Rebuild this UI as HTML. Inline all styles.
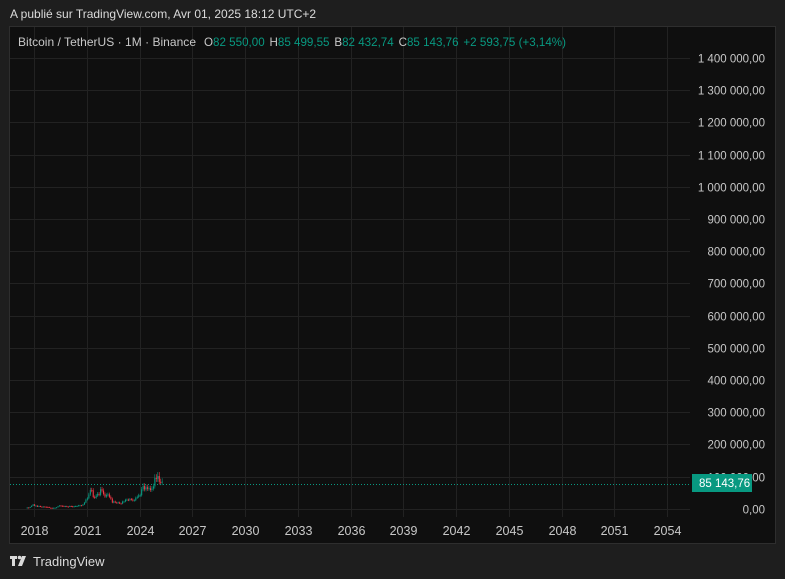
<!DOCTYPE html>
<html><head><meta charset="utf-8"><style>
*{margin:0;padding:0;box-sizing:border-box}
body{width:785px;height:579px;background:#1e1e1e;font-family:"Liberation Sans",sans-serif;overflow:hidden;position:relative;color:#d1d4dc}
.top{position:absolute;left:10px;top:7px;font-size:12px;color:#dbdbdb}
.panel{position:absolute;left:9px;top:26px;width:767px;height:518px;background:#0f0f0f;border:1px solid #2e2e2e}
.bottom{position:absolute;left:33px;top:554px;font-size:13px;color:#dbdbdb}
</style></head><body>
<div class="top">A publié sur TradingView.com, Avr 01, 2025 18:12 UTC+2</div>
<div class="panel"></div>
<svg width="785" height="579" style="position:absolute;left:0;top:0" id="s" font-family="Liberation Sans, sans-serif">
<g id="grid" stroke="#222" stroke-width="1"></g>
<g id="c"></g>
<line x1="10" y1="484.5" x2="690" y2="484.5" stroke="#089981" stroke-dasharray="1,2"/>
<text x="18" y="46" font-size="12" fill="#c8c8c8" textLength="178">Bitcoin / TetherUS · 1M · Binance</text>
<text x="204" y="46" font-size="12" fill="#c8c8c8" textLength="362" lengthAdjust="spacingAndGlyphs">O<tspan fill="#089981">82 550,00</tspan><tspan dx="5">H</tspan><tspan fill="#089981">85 499,55</tspan><tspan dx="5">B</tspan><tspan fill="#089981">82 432,74</tspan><tspan dx="5">C</tspan><tspan fill="#089981">85 143,76</tspan><tspan dx="5" fill="#089981">+2 593,75 (+3,14%)</tspan></text>
<g id="ax" font-size="11.5" fill="#c8c8c8"></g>
<rect x="692" y="474" width="60" height="18" fill="#089981"/>
<text x="699" y="487" font-size="11.5" fill="#fff">85 143,76</text>
<g transform="translate(10,555)" fill="#dbdbdb"><path d="M0 1h7v3H5v7H2V4H0z"/><circle cx="9.5" cy="2.5" r="1.8"/><path d="M12 1h4l-4 10H8z"/></g>
</svg>
<div class="bottom">TradingView</div>
<script>
var g=document.getElementById('grid'),ax=document.getElementById('ax'),c=document.getElementById('c'),NS='http://www.w3.org/2000/svg';
function el(p,t,a){var e=document.createElementNS(NS,t);for(var k in a)e.setAttribute(k,a[k]);p.appendChild(e);return e}
var labs=['1 400 000,00','1 300 000,00','1 200 000,00','1 100 000,00','1 000 000,00','900 000,00','800 000,00','700 000,00','600 000,00','500 000,00','400 000,00','300 000,00','200 000,00','100 000,00','0,00'];
for(var i=0;i<15;i++){var y=Math.round(58+i*32.2)+.5;el(g,'line',{x1:10,x2:690,y1:y,y2:y});var t=el(ax,'text',{x:765,y:y+4,'text-anchor':'end'});t.textContent=labs[i];}
for(var i=0;i<13;i++){var x=Math.round(34+i*52.77)+.5;el(g,'line',{x1:x,x2:x,y1:27,y2:517});var t=el(ax,'text',{x:x,y:535,'text-anchor':'middle','font-size':12.5});t.textContent=2018+i*3;}
var d=[4.3,4.7,4.3,6.4,10,13.8,10,10.3,6.9,9.2,7.5,6.4,7.7,7,6.6,6.3,4,3.7,3.4,3.8,4.1,5.3,8.5,10.8,10.1,9.6,8.3,9.1,7.6,7.2,9.3,8.5,6.4,8.6,9.4,9.5,11.3,11.6,10.8,13.8,19.7,28.9,33,45,58.8,57.7,37.3,35,41.5,47.1,43.8,61.3,57,46.2,38.5,43.2,45.5,37.6,31.8,19.9,23.3,20,19.4,20.5,17.2,16.5,23.1,23.1,28.5,29.2,27.2,30.5,29.2,26,27,34.6,37.7,42.3,42.5,61.1,71.3,60.6,67.5,62.7,64.6,58.9,63.3,70.2,96.4,93.4,102.4,84.3,82.5,85.1];
function Y(p){return 509-p*1000*451/1400000}
for(var i=1;i<d.length;i++){var x=26.7+(i-1)*1.467,o=d[i-1],cl=d[i],up=cl>=o,col=up?'#089981':'#f23645';
var hi=Math.max(o,cl)*1.12,lo=Math.min(o,cl)*0.9;
el(c,'line',{x1:x+.5,x2:x+.5,y1:Y(hi),y2:Y(lo),stroke:col,'stroke-width':.6});
var y1=Y(Math.max(o,cl)),y2=Y(Math.min(o,cl));el(c,'rect',{x:x,y:y1,width:1.1,height:Math.max(1,y2-y1),fill:col});}
</script>
</body></html>
